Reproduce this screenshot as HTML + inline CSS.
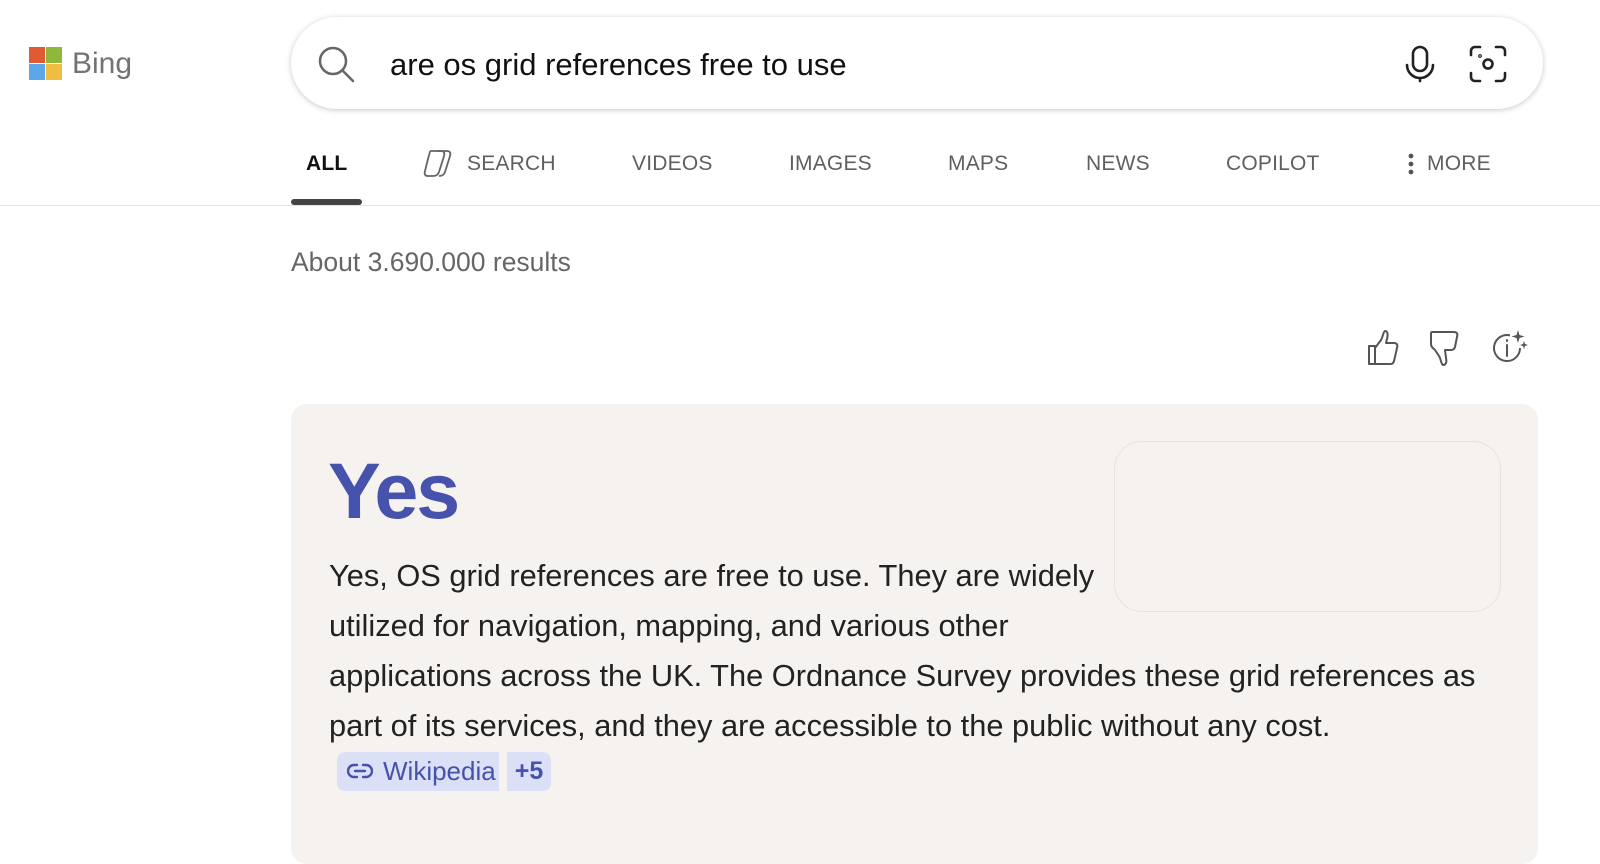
<!DOCTYPE html>
<html><head><style>
*{margin:0;padding:0;box-sizing:border-box}
body{width:1600px;height:843px;overflow:hidden;background:#fff;font-family:"Liberation Sans",Arial,sans-serif;position:relative}
.abs{position:absolute}
.nav{position:absolute;top:152px;font-size:21px;color:#5f5f5f;letter-spacing:0.2px}
</style></head><body>
<div class="abs" style="left:29px;top:47px;width:16px;height:16px;background:#e05a34"></div>
<div class="abs" style="left:46px;top:47px;width:16px;height:16px;background:#8fb73b"></div>
<div class="abs" style="left:29px;top:64px;width:16px;height:16px;background:#5ea6ea"></div>
<div class="abs" style="left:46px;top:64px;width:16px;height:16px;background:#f0bc41"></div>
<div class="abs" style="left:72px;top:47px;font-size:30px;color:#737373">Bing</div>

<div class="abs" style="left:291px;top:17px;width:1252px;height:92px;border-radius:46px;background:#fff;box-shadow:0 1px 6px rgba(0,0,0,0.22)"></div>
<svg class="abs" style="left:316px;top:44px" width="40" height="40" viewBox="0 0 40 40" fill="none" stroke="#666" stroke-width="2.5"><circle cx="17" cy="17" r="13"/><path d="M26.5 26.5L37 37" stroke-linecap="round"/></svg>
<div class="abs" style="left:390px;top:47px;font-size:31px;color:#111">are os grid references free to use</div>
<svg class="abs" style="left:1400px;top:44px" width="40" height="40" viewBox="0 0 40 40" fill="none" stroke="#222" stroke-width="2.6" stroke-linecap="round"><rect x="13" y="3" width="14" height="24" rx="7"/><path d="M7 21a13 13 0 0 0 26 0M20 34v3"/></svg>
<svg class="abs" style="left:1468px;top:44px" width="40" height="40" viewBox="0 0 40 40" fill="none" stroke="#222" stroke-width="2.6" stroke-linecap="round"><path d="M3 11V7a4 4 0 0 1 4-4h5M28 3h5a4 4 0 0 1 4 4v4M37 29v4a4 4 0 0 1-4 4h-5M12 37H7a4 4 0 0 1-4-4v-4"/><circle cx="20" cy="20" r="4.5"/><circle cx="12" cy="12" r="0.6"/></svg>

<div class="nav" style="left:306px;color:#111;font-weight:bold">ALL</div>
<div class="abs" style="left:291px;top:199px;width:71px;height:6px;border-radius:3px;background:#444"></div>
<svg class="abs" style="left:423px;top:148px" width="32" height="30" viewBox="0 0 32 30" fill="none" stroke="#666" stroke-width="1.8"><path d="M8 3h10c3 0 4 2 3 5l-5 16c-1 3-3 4-6 4H5c-3 0-4-2-3-5L6 7c1-3 1-4 2-4z"/><path d="M14 3h10c3 0 4 2 3 5l-5 16c-1 3-3 4-6 4"/></svg>
<div class="nav" style="left:467px">SEARCH</div>
<div class="nav" style="left:632px">VIDEOS</div>
<div class="nav" style="left:789px">IMAGES</div>
<div class="nav" style="left:948px">MAPS</div>
<div class="nav" style="left:1086px">NEWS</div>
<div class="nav" style="left:1226px">COPILOT</div>
<svg class="abs" style="left:1406px;top:153px" width="10" height="22"><circle cx="5" cy="3" r="2.4" fill="#555"/><circle cx="5" cy="11" r="2.4" fill="#555"/><circle cx="5" cy="19" r="2.4" fill="#555"/></svg>
<div class="nav" style="left:1427px">MORE</div>
<div class="abs" style="left:0;top:205px;width:1600px;height:1px;background:#e5e5e5"></div>

<div class="abs" style="left:291px;top:247px;font-size:26.5px;color:#666">About 3.690.000 results</div>

<svg class="abs" style="left:1365px;top:328px" width="34" height="40" viewBox="0 0 34 40" fill="none" stroke="#555" stroke-width="2" stroke-linejoin="round"><path d="M4 18h6v18H4zM10 20l6-8c2-3 2-8 4-9 3 0 3 4 2 8l-1 4h8c3 0 4 2 3 5l-3 13c-1 3-2 3-5 3H10"/></svg>
<svg class="abs" style="left:1427px;top:328px" width="34" height="40" viewBox="0 0 34 40" fill="none" stroke="#555" stroke-width="2" stroke-linejoin="round"><path d="M5 4h22c3 0 4 2 3 5l-2 10c-1 3-3 3-5 3h-5l1 8c1 4 0 7-3 7-2-1-2-6-4-9l-4-6c-2-2-4-3-4-6V7c0-2 0-3 1-3z"/></svg>
<svg class="abs" style="left:1490px;top:328px" width="40" height="40" viewBox="0 0 40 40" fill="none" stroke="#555" stroke-width="2"><path d="M30 20a13 13 0 1 1-10-12.6"/><path d="M17 17v11M17 12v1" stroke-linecap="round"/><path d="M28 2l1.5 5 5 1.5-5 1.5-1.5 5-1.5-5-5-1.5 5-1.5z" fill="#555" stroke="none"/><path d="M34 13l1 3 3 1-3 1-1 3-1-3-3-1 3-1z" fill="#555" stroke="none"/></svg>

<div class="abs" style="left:291px;top:404px;width:1247px;height:460px;border-radius:16px;background:#f5f2ef"></div>
<div class="abs" style="left:1114px;top:441px;width:387px;height:171px;border-radius:28px;border:1.5px solid #e7e2de"></div>
<div class="abs" style="left:328px;top:445px;font-size:79px;font-weight:bold;color:#4652ab;letter-spacing:-2px">Yes</div>
<div class="abs" style="left:329px;top:551px;width:1175px;font-size:30.8px;line-height:50px;color:#222">
<div style="width:780px">Yes, OS grid references are free to use. They are widely utilized for navigation, mapping, and various other</div>
applications across the UK. The Ordnance Survey provides these grid references as part of its services, and they are accessible to the public without any cost.</div>
<div class="abs" style="left:337px;top:752px;width:162px;height:39px;border-radius:8px 0 0 8px;background:#dce0f7"></div>
<svg class="abs" style="left:347px;top:760px" width="26" height="22" viewBox="0 0 26 22" fill="none" stroke="#4652ab" stroke-width="2.4" stroke-linecap="round"><path d="M10 5H7a6 6 0 0 0 0 12h3M16 5h3a6 6 0 0 1 0 12h-3M8 11h10"/></svg>
<div class="abs" style="left:383px;top:756px;font-size:26px;color:#4652ab">Wikipedia</div>
<div class="abs" style="left:507px;top:752px;width:44px;height:39px;border-radius:0 8px 8px 0;background:#dce0f7;font-size:25px;font-weight:bold;color:#4652ab;text-align:center;line-height:39px">+5</div>
</body></html>
